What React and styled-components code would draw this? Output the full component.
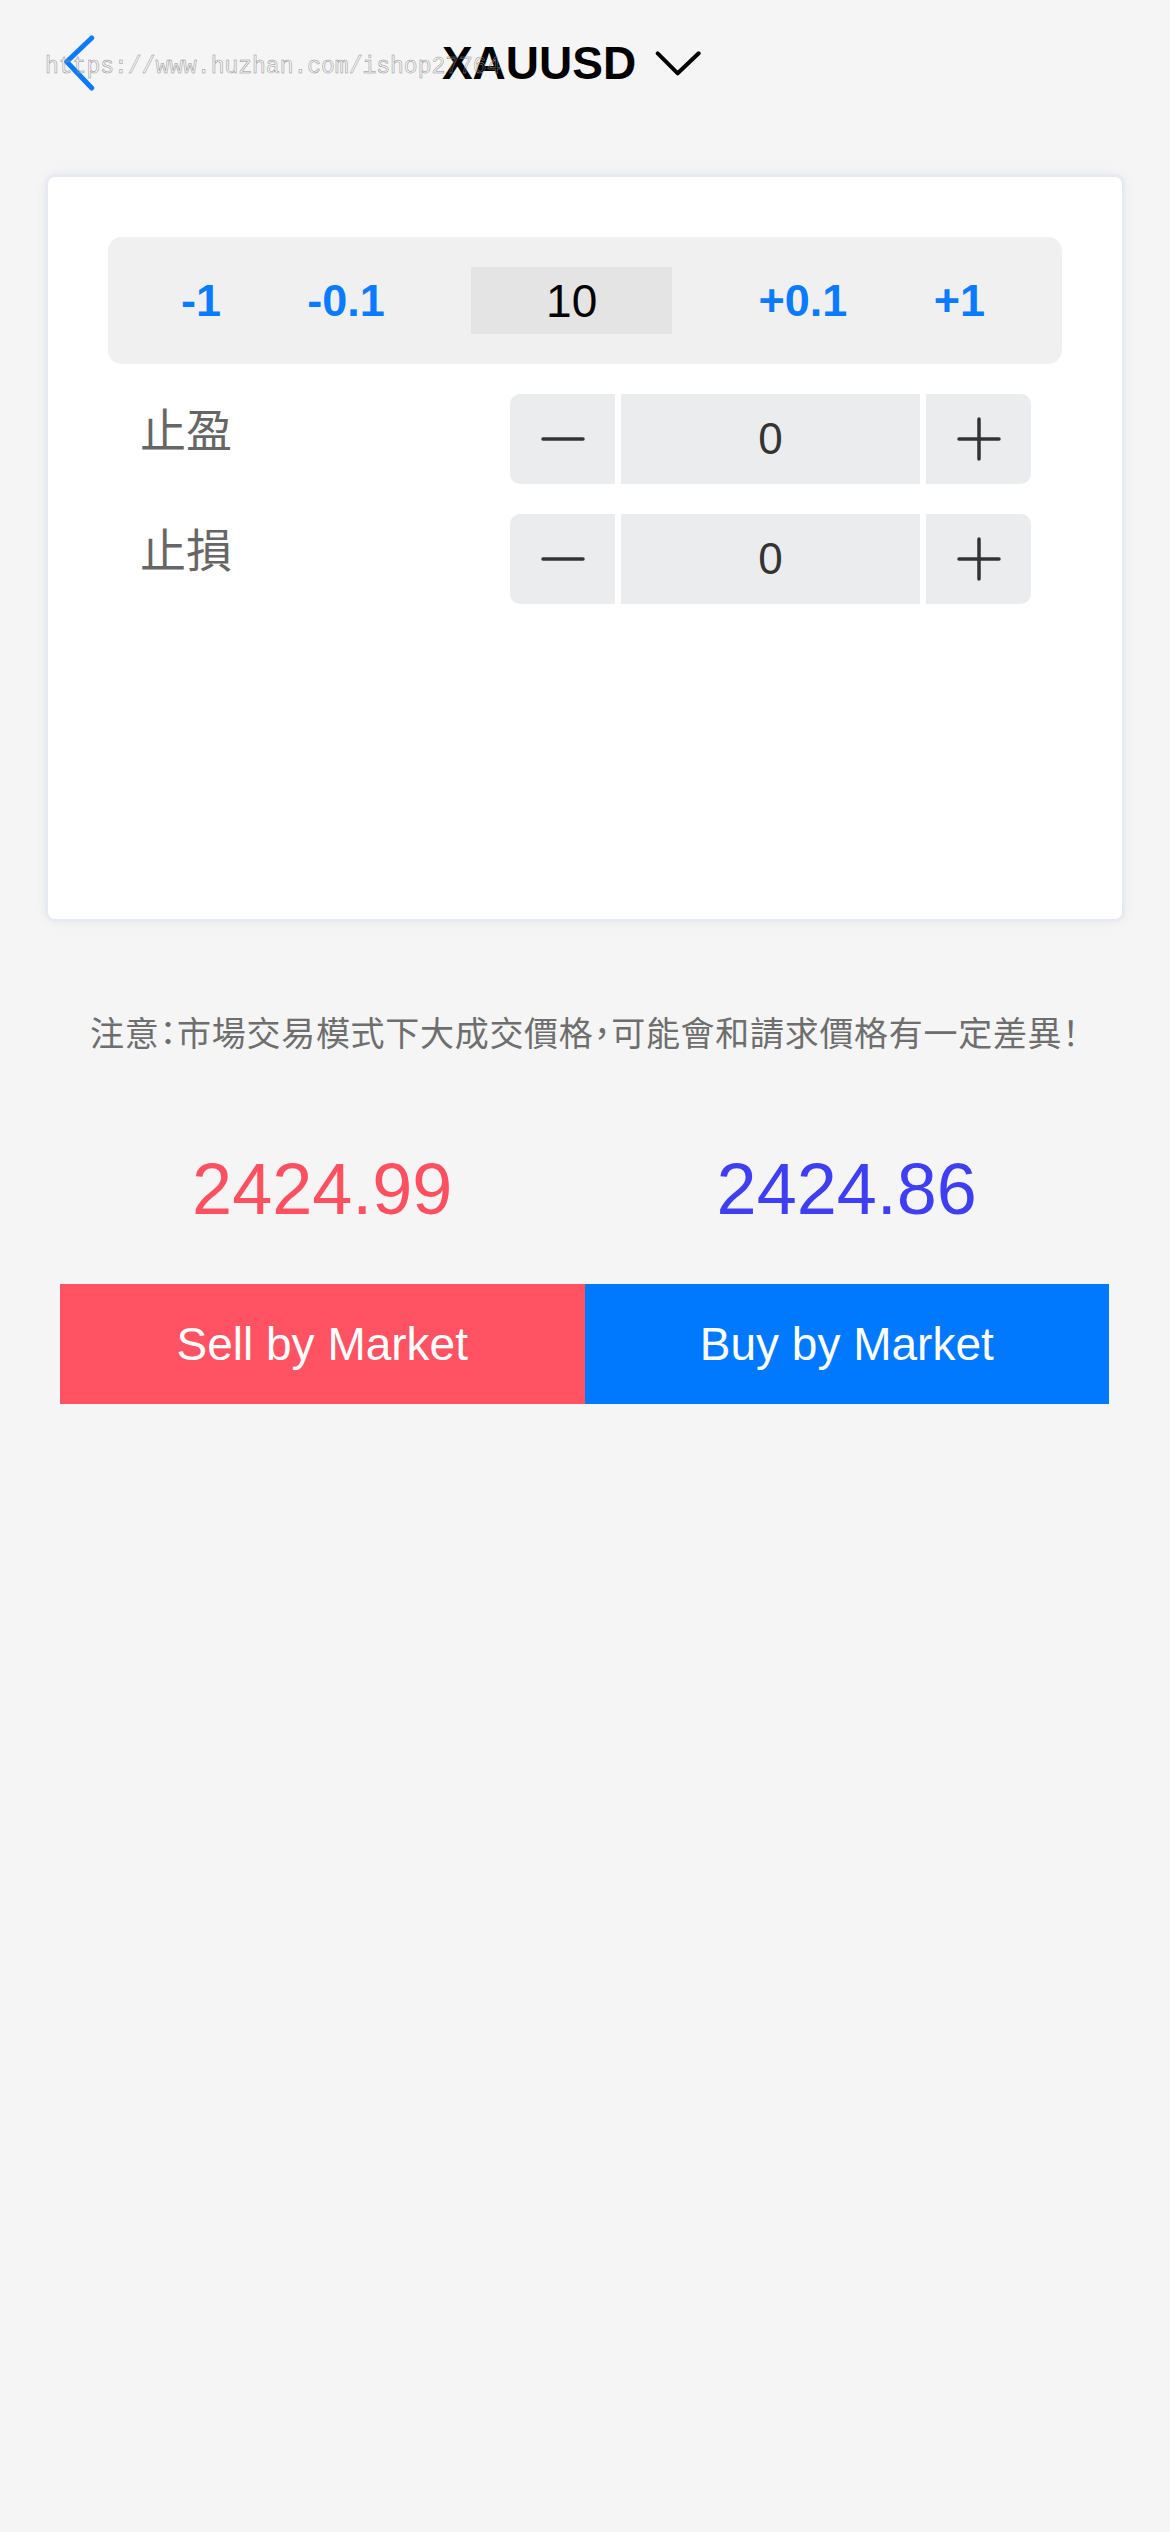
import styled, { createGlobalStyle } from 'styled-components';

const GlobalStyle = createGlobalStyle`
    body {
        margin: 0;
        background: #f5f5f5;
        font-family: "Liberation Sans", "Noto Sans CJK TC", sans-serif;
    }
`;

const Page = styled.div`
    position: relative;
    width: 1170px;
    min-height: 2532px;
    background: #f5f5f5;
`;

const Header = styled.div`
    display: grid;
    grid-template-columns: 1fr auto 1fr;
    align-items: center;
    height: 126px;
`;

const Back = styled.div`
    display: flex;
    align-items: center;
    padding-left: 64px;
`;

const Title = styled.div`
    display: flex;
    align-items: center;
    gap: 19px;
    margin-right: 26px;
    font-size: 46px;
    font-weight: 700;
    color: #000;
`;

const Watermark = styled.div`
    position: absolute;
    left: 45px;
    top: 52px;
    font-family: "Liberation Mono", monospace;
    font-size: 23px;
    line-height: 30px;
    color: transparent;
    -webkit-text-stroke: 0.5px #8f8f8f;
    pointer-events: none;
`;

const Card = styled.div`
    box-sizing: border-box;
    margin: 48px 45px 0;
    height: 748px;
    padding: 60px;
    background: #fff;
    border: 3px solid #e8eaf2;
    border-radius: 10px;
    box-shadow: 0 0 12px rgba(0, 0, 0, 0.05);
`;

const StepBar = styled.div`
    display: flex;
    align-items: center;
    justify-content: space-between;
    height: 127px;
    padding: 0 77px 0 73px;
    background: #f0f0f0;
    border-radius: 14px;
`;

const StepBtn = styled.span`
    font-size: 45px;
    font-weight: 700;
    color: #0a7bff;
`;

const ValueBox = styled.div`
    display: flex;
    align-items: center;
    justify-content: center;
    width: 201px;
    height: 67px;
    background: #e4e4e4;
    font-size: 46px;
    color: #000;
`;

const Row = styled.div`
    display: flex;
    justify-content: space-between;
    align-items: flex-start;
    margin-top: 30px;
    padding: 0 31px 0 32px;
`;

const Label = styled.div`
    font-family: "Noto Sans CJK TC", sans-serif;
    font-size: 46px;
    line-height: 66px;
    color: #666;
`;

const Control = styled.div`
    display: grid;
    grid-template-columns: 105px 1fr 105px;
    gap: 6px;
    width: 521px;
    height: 90px;
`;

const CtrlBtn = styled.div`
    display: flex;
    align-items: center;
    justify-content: center;
    background: #ebecee;
    border-radius: ${({ side }) => (side === 'left' ? '10px 0 0 10px' : '0 10px 10px 0')};
`;

const CtrlValue = styled.div`
    display: flex;
    align-items: center;
    justify-content: center;
    background: #ebecee;
    font-size: 44px;
    color: #333;
`;

const Notice = styled.div`
    margin-top: 80px;
    font-family: "Noto Sans CJK TC", sans-serif;
    font-size: 34px;
    line-height: 60px;
    letter-spacing: 0.7px;
    font-feature-settings: "palt";
    text-align: center;
    color: #6e6e6e;
`;

const Prices = styled.div`
    display: grid;
    grid-template-columns: 1fr 1fr;
    margin: 77px 61px 0 60px;
`;

const Price = styled.div`
    font-size: 72px;
    line-height: 100px;
    text-align: center;
    color: ${({ color }) => color};
`;

const Actions = styled.div`
    display: grid;
    grid-template-columns: 1fr 1fr;
    margin: 45px 61px 0 60px;
`;

const ActionBtn = styled.div`
    display: flex;
    align-items: center;
    justify-content: center;
    height: 120px;
    background: ${({ bg }) => bg};
    font-size: 46px;
    color: #fff;
`;

const Minus = () => (
    <svg width="44" height="44" viewBox="0 0 44 44">
        <line x1="2" y1="22" x2="42" y2="22" stroke="#333" strokeWidth="3.5" strokeLinecap="round" />
    </svg>
);

const Plus = () => (
    <svg width="44" height="44" viewBox="0 0 44 44">
        <line x1="2" y1="22" x2="42" y2="22" stroke="#333" strokeWidth="3.5" strokeLinecap="round" />
        <line x1="22" y1="2" x2="22" y2="42" stroke="#333" strokeWidth="3.5" strokeLinecap="round" />
    </svg>
);

const Stepper = ({ label }) => (
    <Row>
        <Label>{label}</Label>
        <Control>
            <CtrlBtn side="left"><Minus /></CtrlBtn>
            <CtrlValue>0</CtrlValue>
            <CtrlBtn side="right"><Plus /></CtrlBtn>
        </Control>
    </Row>
);

const App = () => {
    return (
        <Page>
            <GlobalStyle />
            <Header>
                <Back>
                    <svg width="31" height="56" viewBox="0 0 31 56">
                        <path d="M27.7 3 L2.7 26.7 L27.7 53" fill="none" stroke="#0a7bff" strokeWidth="5" strokeLinecap="round" strokeLinejoin="round" />
                    </svg>
                </Back>
                <Title>
                    XAUUSD
                    <svg width="47" height="26" viewBox="0 0 47 26">
                        <path d="M2.7 3.3 L22.7 23.3 L43.7 3.3" fill="none" stroke="#000" strokeWidth="4" strokeLinecap="round" strokeLinejoin="round" />
                    </svg>
                </Title>
                <div />
            </Header>
            <Watermark>https://www.huzhan.com/ishop27764</Watermark>

            <Card>
                <StepBar>
                    <StepBtn>-1</StepBtn>
                    <StepBtn>-0.1</StepBtn>
                    <ValueBox>10</ValueBox>
                    <StepBtn>+0.1</StepBtn>
                    <StepBtn>+1</StepBtn>
                </StepBar>
                <Stepper label="止盈" />
                <Stepper label="止損" />
            </Card>

            <Notice>注意：市場交易模式下大成交價格，可能會和請求價格有一定差異！</Notice>

            <Prices>
                <Price color="#ff5060">2424.99</Price>
                <Price color="#3e3ef2">2424.86</Price>
            </Prices>

            <Actions>
                <ActionBtn bg="#ff5262">Sell by Market</ActionBtn>
                <ActionBtn bg="#0079fe">Buy by Market</ActionBtn>
            </Actions>
        </Page>
    );
};

export default App;
